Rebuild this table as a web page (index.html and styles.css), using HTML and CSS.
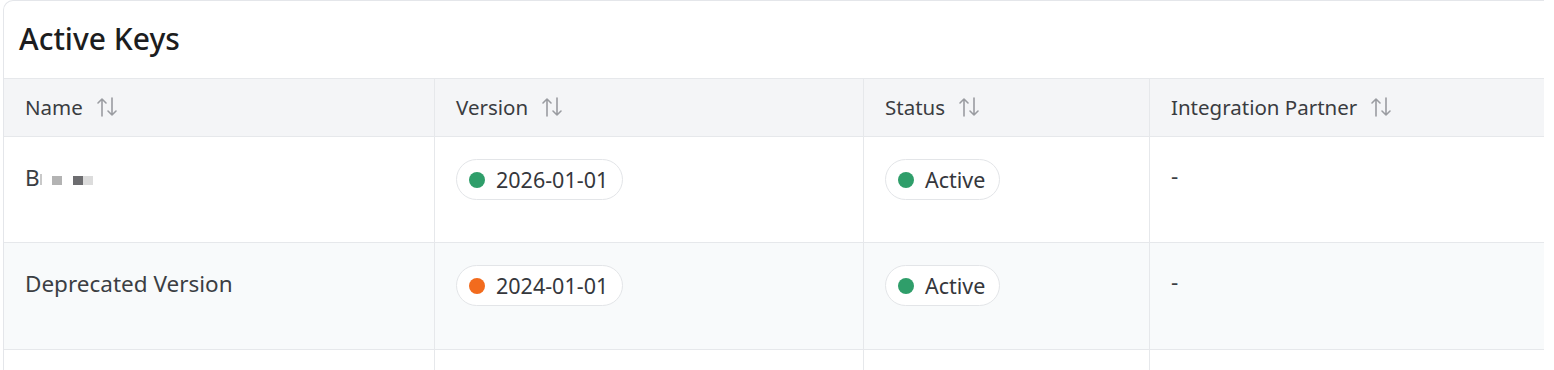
FILE: index.html
```html
<!DOCTYPE html>
<html lang="en">
<head>
<meta charset="utf-8">
<title>Active Keys</title>
<link rel="stylesheet" href="styles.css">
</head>
<body>
<div class="card">
  <div class="card-title">Active Keys</div>
  <div class="table">
    <div class="row head">
      <div class="cell c1"><span>Name</span><svg class="sort" viewBox="0 0 22 22"><path d="M6 20V3M2 7l4-4 4 4M16 2v17M12 15l4 4 4-4"/></svg></div>
      <div class="cell c2"><span>Version</span><svg class="sort" viewBox="0 0 22 22"><path d="M6 20V3M2 7l4-4 4 4M16 2v17M12 15l4 4 4-4"/></svg></div>
      <div class="cell c3"><span>Status</span><svg class="sort" viewBox="0 0 22 22"><path d="M6 20V3M2 7l4-4 4 4M16 2v17M12 15l4 4 4-4"/></svg></div>
      <div class="cell c4"><span>Integration Partner</span><svg class="sort" viewBox="0 0 22 22"><path d="M6 20V3M2 7l4-4 4 4M16 2v17M12 15l4 4 4-4"/></svg></div>
    </div>
    <div class="row body">
      <div class="cell c1"><span class="txt">B<span class="redact"><span class="bar"></span><span class="blk b1"></span><span class="blk b2"></span><span class="blk b3"></span></span></span></div>
      <div class="cell c2"><span class="pill"><span class="dot green"></span>2026-01-01</span></div>
      <div class="cell c3"><span class="pill"><span class="dot green"></span>Active</span></div>
      <div class="cell c4"><span class="txt dash">-</span></div>
    </div>
    <div class="row body alt">
      <div class="cell c1"><span class="txt">Deprecated Version</span></div>
      <div class="cell c2"><span class="pill"><span class="dot orange"></span>2024-01-01</span></div>
      <div class="cell c3"><span class="pill"><span class="dot green"></span>Active</span></div>
      <div class="cell c4"><span class="txt dash">-</span></div>
    </div>
    <div class="row body">
      <div class="cell c1"></div>
      <div class="cell c2"></div>
      <div class="cell c3"></div>
      <div class="cell c4"></div>
    </div>
  </div>
</div>
</body>
</html>
```

FILE: styles.css
```css
html, body {
  margin: 0;
  padding: 0;
  background: #ffffff;
}
body {
  padding-left: 3px;
  font-family: "Noto Sans", "Open Sans", sans-serif;
  color: #3b3e43;
  overflow: hidden;
  height: 370px;
}
.card {
  width: 1541px;
  border: 1px solid #e4e6ea;
  border-right: none;
  border-bottom: none;
  border-top-left-radius: 10px;
  background: #fff;
  box-sizing: border-box;
}
.card-title {
  height: 77px;
  display: flex;
  align-items: center;
  padding-left: 15px;
  padding-bottom: 3px;
  box-sizing: border-box;
  font-size: 30px;
  font-weight: 500;
  color: #1c1d20;
}
.table {
  display: flex;
  flex-direction: column;
}
.row {
  display: grid;
  grid-template-columns: 431px 429px 286px 1fr;
  border-bottom: 1px solid #e6e8eb;
}
.row.head {
  border-top: 1px solid #e6e8eb;
  background: #f4f5f7;
  height: 57px;
}
.row.body {
  height: 105px;
}
.row.alt {
  background: #f8fafb;
  height: 106px;
}
.cell {
  border-right: 1px solid #e6e8eb;
  padding-left: 21px;
  box-sizing: border-box;
}
.cell.c4 {
  border-right: none;
}
.head .cell {
  display: flex;
  align-items: center;
  gap: 13px;
  padding-bottom: 1px;
  font-size: 20.5px;
  color: #3a3c41;
}
.sort {
  width: 22px;
  height: 22px;
  fill: none;
  stroke: #9a9ca1;
  stroke-width: 1.6;
  stroke-linecap: round;
  stroke-linejoin: round;
}
.body .cell {
  padding-top: 22px;
  font-size: 22.5px;
}
.txt {
  display: inline-flex;
  align-items: center;
  height: 37px;
  line-height: 37px;
  color: #3b3e43;
}
.txt.dash {
  height: 33px;
}
.redact {
  display: inline-flex;
  align-items: center;
  height: 9px;
  margin-left: 0;
  margin-top: 5px;
}
.bar {
  width: 2px;
  height: 11px;
  background: #c9c9c9;
  margin-right: 10px;
  margin-top: -2px;
}
.blk {
  height: 9px;
  width: 10px;
}
.b1 { background: #b3b3b3; margin-right: 11px; }
.b2 { background: #6d6d70; }
.b3 { background: #dcdcdc; }
.pill {
  display: inline-flex;
  align-items: center;
  height: 41px;
  box-sizing: border-box;
  border: 1px solid #e3e5e8;
  border-radius: 21px;
  background: #fff;
  padding: 0 14px 0 12px;
  gap: 11px;
  font-size: 21.5px;
  color: #35373c;
}
.dot {
  width: 16px;
  height: 16px;
  border-radius: 50%;
  flex: none;
}
.dot.green { background: #2f9e6a; }
.dot.orange { background: #f26b1d; }
```
